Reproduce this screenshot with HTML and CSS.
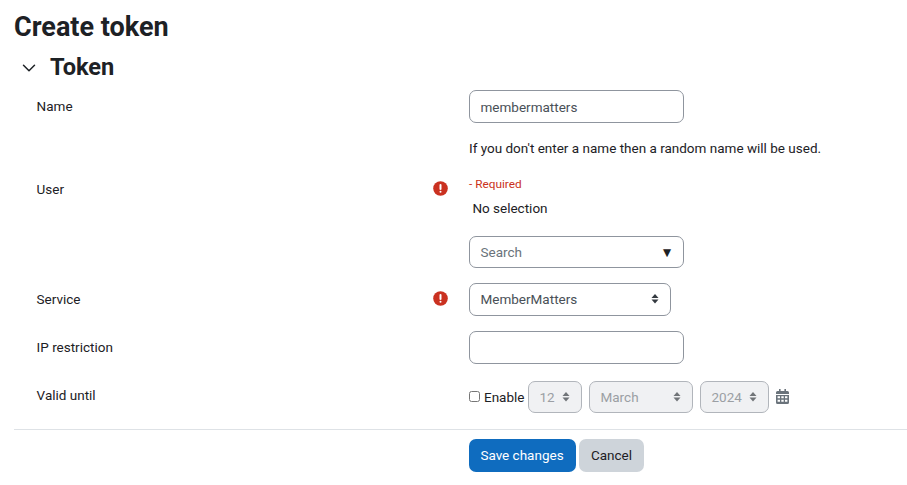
FILE: index.html
```html
<!DOCTYPE html>
<html lang="en">
<head>
<meta charset="utf-8">
<title>Create token</title>
<link rel="stylesheet" href="styles.css">
</head>
<body>
<h1>Create token</h1>
<form>
  <div class="section-head">
    <svg class="chevron" viewBox="0 0 14 8"><path d="M1.500 1.200L7 6.700l5.500-5.500"/></svg>
    <h2>Token</h2>
  </div>
  <div class="row row-name">
    <label class="label" for="name">Name</label>
    <div class="field">
      <input class="control" id="name" type="text" value="membermatters">
      <p class="help">If you don't enter a name then a random name will be used.</p>
    </div>
  </div>
  <div class="row row-user">
    <label class="label" for="user">User</label>
    <svg class="required" viewBox="0 0 15 15"><circle cx="7.5" cy="7.5" r="7.3"/><path d="M7.5 4.1v4"/><circle class="dot" cx="7.5" cy="10.7" r="1"/></svg>
    <div class="field">
      <p class="error">- Required</p>
      <p class="selection">No selection</p>
      <div class="control search"><input id="user" type="text" placeholder="Search"><span class="arrow">▼</span></div>
    </div>
  </div>
  <div class="row row-service">
    <span class="label">Service</span>
    <svg class="required" viewBox="0 0 15 15"><circle cx="7.5" cy="7.5" r="7.3"/><path d="M7.5 4.1v4"/><circle class="dot" cx="7.5" cy="10.7" r="1"/></svg>
    <div class="field">
      <div class="control select service"><span>MemberMatters</span><svg viewBox="0 0 8 10"><path d="M4 0l3.500 4h-7zM4 9.500L.5 5.500h7z"/></svg></div>
    </div>
  </div>
  <div class="row row-ip">
    <label class="label" for="ip">IP restriction</label>
    <div class="field"><input class="control" id="ip" type="text"></div>
  </div>
  <div class="row row-date">
    <span class="label">Valid until</span>
    <div class="field dates">
      <input class="check" id="enable" type="checkbox"><label class="enable" for="enable">Enable</label>
      <div class="control select disabled day"><span>12</span><svg viewBox="0 0 8 10"><path d="M4 0l3.500 4h-7zM4 9.500L.5 5.500h7z"/></svg></div>
      <div class="control select disabled month"><span>March</span><svg viewBox="0 0 8 10"><path d="M4 0l3.500 4h-7zM4 9.500L.5 5.500h7z"/></svg></div>
      <div class="control select disabled year"><span>2024</span><svg viewBox="0 0 8 10"><path d="M4 0l3.500 4h-7zM4 9.500L.5 5.500h7z"/></svg></div>
      <svg class="calendar" viewBox="0 0 13 15"><path fill-rule="evenodd" d="M3 0h1.600v2h3.800V0H10v2h1.500Q13 2 13 3.500V5H0V3.500Q0 2 1.500 2H3zM0 6h13v7.500Q13 15 11.500 15h-10Q0 15 0 13.500zM1.600 7.200v2h2.400v-2zM5.300 7.200v2h2.400v-2zM9 7.200v2h2.400v-2zM1.600 10.800v2h2.400v-2zM5.300 10.800v2h2.400v-2zM9 10.800v2h2.400v-2z"/></svg>
    </div>
  </div>
  <div class="actions">
    <button class="btn primary" type="button">Save changes</button>
    <button class="btn secondary" type="button">Cancel</button>
  </div>
</form>
</body>
</html>
```
FILE: styles.css
```css
* { box-sizing: border-box; }
body {
  margin: 0;
  padding: 11px 0 0 14px;
  background: #fff;
  color: #1d2125;
  font: 13.5px/20px Roboto, sans-serif;
  overflow: hidden;
}
h1, h2, p { margin: 0; }
h1 { font-size: 27px; line-height: 32px; font-weight: 700; }
h2 { font-size: 23.6px; line-height: 30px; font-weight: 700; }
.section-head { display: flex; align-items: center; height: 30px; margin-top: 9px; padding-left: 8px; }
.chevron { width: 14px; height: 8px; margin: 1px 14px 0 0; fill: none; stroke: #1d2125; stroke-width: 1.5; stroke-linecap: round; stroke-linejoin: round; }
.row { display: grid; grid-template-columns: 396.4px 36px 1fr; align-items: start; padding-left: 22.6px; }
.label { padding-top: 6px; }
.field { grid-column: 3; }
.row-name { height: 83px; margin-top: 8px; }
.row-user { height: 110px; }
.row-service { height: 48px; }
.row-ip { height: 50px; }
.row-date { height: 48px; }
.row-date .label { padding-top: 4px; }
.row-user .required { margin-top: 8px; }
.control {
  display: flex;
  align-items: center;
  width: 215px;
  height: 33px;
  padding: 0 11px 0 10.5px;
  border: 1px solid #8f959e;
  border-radius: 7px;
  background: #fff;
  color: #495057;
  font: inherit;
}
.help { margin-top: 15px; }
.required { width: 15px; height: 15px; margin-top: 8px; fill: #ca3120; }
.required path { fill: none; stroke: #fff; stroke-width: 2; stroke-linecap: round; }
.required .dot { fill: #fff; }
.error { height: 22px; font-size: 11.8px; line-height: 23px; color: #ca3120; }
.selection { height: 20px; padding-left: 3.4px; margin-top: 3px; }
.search { height: 32px; margin-top: 18px; }
.search input { flex: 1; min-width: 0; padding: 0; border: 0; font: inherit; }
.search input::placeholder { color: #6a737b; }
.arrow { margin-right: 1px; color: #1d2125; font-family: "DejaVu Sans", sans-serif; font-size: 10.5px; }
.select { justify-content: space-between; }
.select svg { width: 8px; height: 10px; fill: #343a40; }
.service { width: 202px; padding-bottom: 1px; }
.dates { display: flex; align-items: center; height: 32px; }
.check { width: 11px; height: 11px; margin: 0 4px 1px 0; }
.enable { width: 44px; white-space: nowrap; }
.disabled { height: 32px; background: #f0f1f3; border-color: #b1b5bb; color: #9b9fa4; margin-right: 7px; }
.disabled svg { margin-bottom: 1px; fill: #707478; }
.day { width: 54px; }
.month { width: 104px; }
.year { width: 69px; }
.calendar { width: 13px; height: 15px; margin-bottom: 1px; fill: #6a737b; }
.actions { display: flex; gap: 3px; padding: 9px 0 0 455px; border-top: 1px solid #dee2e6; }
.btn { height: 33px; padding: 0 0 1px; border: 0; border-radius: 7px; font: inherit; }
.primary { width: 107px; padding-right: 1px; background: #0f6cbf; color: #fff; }
.secondary { width: 65px; background: #ced4da; color: #1d2125; }
```
